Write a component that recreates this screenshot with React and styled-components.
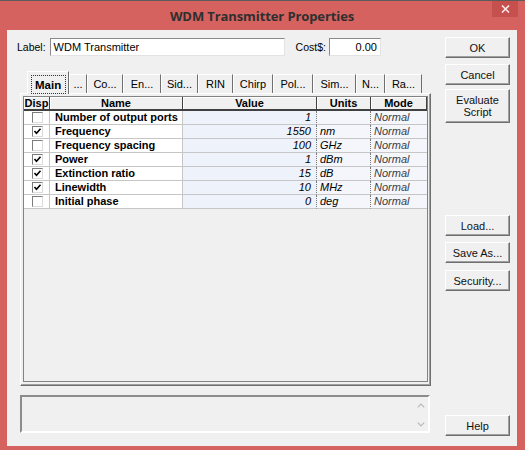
import React from "react";
import styled, { createGlobalStyle, css } from "styled-components";

const GlobalStyle = createGlobalStyle`
  html, body {
    margin: 0;
    padding: 0;
    background: #d6625f;
  }
  body {
    font-family: "Liberation Sans", Arial, sans-serif;
    font-size: 11px;
    color: #000;
  }
`;

const Window = styled.div`
  width: 525px;
  height: 450px;
  box-sizing: border-box;
  background: #d6625f;
  border-top: 1px solid #5b5b5b;
  padding: 0 8px 4px 7px;
  display: flex;
  flex-direction: column;
`;

const TitleBar = styled.div`
  height: 29px;
  display: grid;
  grid-template-columns: 1fr auto 1fr;
  align-items: center;
`;

const Title = styled.div`
  grid-column: 2;
  font-family: "Open Sans", "Noto Sans", sans-serif;
  font-weight: 700;
  font-size: 13px;
  color: #2f2f2f;
  letter-spacing: -0.1px;
`;

const CloseButton = styled.div`
  grid-column: 3;
  justify-self: end;
  align-self: start;
  width: 26px;
  height: 16px;
  margin-right: -1px;
  background: #c5504e;
  display: flex;
  align-items: center;
  justify-content: center;
`;

const Client = styled.div`
  flex: 1;
  background: #f0f0f0;
  display: flex;
`;

const LeftPane = styled.div`
  width: 424px;
  box-sizing: border-box;
  padding: 8px 0 0 13px;
  display: flex;
  flex-direction: column;
`;

const FieldRow = styled.div`
  display: flex;
  align-items: center;
  height: 18px;
  margin-left: -3px;
`;

const FieldLabel = styled.span`
  margin-right: ${(p) => p.$gap}px;
  margin-left: ${(p) => p.$lead || 0}px;
  font-size: 10.5px;
`;

const TextBox = styled.div`
  box-sizing: border-box;
  width: ${(p) => p.$width}px;
  height: 18px;
  background: #fff;
  border: 1px solid;
  border-color: #8a8a8a #e3e3e3 #e3e3e3 #8a8a8a;
  padding: 0 3px;
  line-height: 16px;
  text-align: ${(p) => (p.$right ? "right" : "left")};
  white-space: nowrap;
`;

const TabStrip = styled.div`
  display: flex;
  align-items: flex-end;
  height: 23px;
  margin: 15px 0 -1px 7px;
  position: relative;
  z-index: 1;
`;

const Tab = styled.div`
  box-sizing: border-box;
  width: ${(p) => p.$width}px;
  height: 19px;
  margin-bottom: 1px;
  border-left: 1px solid #fff;
  border-top: 1px solid #fff;
  border-right: 1px solid #6f6f6f;
  display: flex;
  align-items: center;
  justify-content: center;
  white-space: nowrap;
  font-size: 11px;
  ${(p) =>
    p.$active &&
    css`
      height: 23px;
      margin-bottom: 0;
      background: #f0f0f0;
      font-weight: 700;
      font-size: 11.5px;
      padding: 3px 2px 0 3px;
    `}
`;

const FocusRing = styled.span`
  flex: 1;
  align-self: stretch;
  border: 1px dotted #333;
  display: flex;
  align-items: center;
  padding-left: 3px;
`;

const Panel = styled.div`
  box-sizing: border-box;
  width: 411px;
  height: 293px;
  border: 1px solid;
  border-color: #fff #6f6f6f #6f6f6f #fff;
  box-shadow: inset -1px -1px 0 #a0a0a0;
  padding: 2px 3px 3px 2px;
  display: flex;
`;

const GridBox = styled.div`
  flex: 1;
  border: 1px solid #828282;
  background: #f0f0f0;
`;

const GridRow = styled.div`
  display: grid;
  grid-template-columns: 26px 133px 134px 54px 56px;
  height: 14px;
`;

const HeadCell = styled.div`
  box-sizing: border-box;
  background: #f0f0f0;
  border-right: 1px solid #404040;
  border-bottom: 2px solid #404040;
  box-shadow: inset 1px 1px 0 #fff;
  font-weight: 700;
  text-align: center;
  line-height: 12px;
  white-space: nowrap;
  overflow: hidden;
`;

const Cell = styled.div`
  box-sizing: border-box;
  height: 14px;
  line-height: 13px;
  background: #fff;
  border-bottom: 1px solid #c6c6c6;
  border-right: 1px solid #c6c6c6;
  white-space: nowrap;
  overflow: hidden;
  padding: 0 3px;
  ${(p) =>
    p.$kind === "disp" &&
    css`
      padding: 1px 0 0 8px;
    `}
  ${(p) =>
    p.$kind === "name" &&
    css`
      font-weight: 700;
      padding-left: 5px;
    `}
  ${(p) =>
    p.$kind === "value" &&
    css`
      background: #eef2fb;
      text-align: right;
      font-style: italic;
      padding-right: 5px;
      border-right: 1px dotted #7a7a7a;
    `}
  ${(p) =>
    p.$kind === "units" &&
    css`
      background: #f4f6fc;
      font-style: italic;
      border-right: 1px dotted #7a7a7a;
    `}
  ${(p) =>
    p.$kind === "mode" &&
    css`
      background: #f4f6fc;
      font-style: italic;
      color: #3c3c3c;
      border-right: none;
    `}
`;

const CheckBox = styled.div`
  box-sizing: border-box;
  width: 11px;
  height: 11px;
  background: #fff;
  border: 1px solid;
  border-color: #7c7c7c #dcdcdc #dcdcdc #7c7c7c;
  display: flex;
  align-items: center;
  justify-content: center;
`;

const StatusBox = styled.div`
  box-sizing: border-box;
  width: 410px;
  height: 38px;
  margin-top: 9px;
  border: 2px solid;
  border-color: #8c8c8c #fff #fff #8c8c8c;
  display: flex;
  justify-content: flex-end;
`;

const ScrollColumn = styled.div`
  width: 14px;
  display: flex;
  flex-direction: column;
  justify-content: space-between;
  align-items: center;
  padding: 6px 0 4px;
`;

const RightPane = styled.div`
  flex: 1;
  padding: 7px 0 10px 14px;
  display: flex;
  flex-direction: column;
`;

const Button = styled.div`
  box-sizing: border-box;
  width: 65px;
  height: ${(p) => p.$height || 21}px;
  margin-top: ${(p) => (p.$auto ? "auto" : `${p.$top || 0}px`)};
  background: #f0f0f0;
  border: 1px solid;
  border-color: #fff #6f6f6f #6f6f6f #fff;
  box-shadow: inset -1px -1px 0 #a0a0a0;
  display: flex;
  align-items: center;
  justify-content: center;
  text-align: center;
  font-size: 11px;
  line-height: 12px;
  color: #111;
`;

const Check = () => (
  <svg width="9" height="9" viewBox="0 0 9 9">
    <path d="M1.5 4 L3.5 6.2 L7.5 1.8" fill="none" stroke="#000" strokeWidth="1.6" />
  </svg>
);

const Chevron = ({ up }) => (
  <svg width="8" height="5" viewBox="0 0 8 5">
    <path
      d={up ? "M0.8 4.3 L4 1 L7.2 4.3" : "M0.8 0.7 L4 4 L7.2 0.7"}
      fill="none"
      stroke="#b8b8b8"
      strokeWidth="1.2"
    />
  </svg>
);

const tabs = [
  ["Main", 42],
  ["...", 18],
  ["Co...", 36],
  ["En...", 38],
  ["Sid...", 37],
  ["RIN", 35],
  ["Chirp", 40],
  ["Pol...", 40],
  ["Sim...", 43],
  ["N...", 29],
  ["Ra...", 37],
];

const params = [
  { disp: false, name: "Number of output ports", value: "1", units: "" },
  { disp: true, name: "Frequency", value: "1550", units: "nm" },
  { disp: false, name: "Frequency spacing", value: "100", units: "GHz" },
  { disp: true, name: "Power", value: "1", units: "dBm" },
  { disp: true, name: "Extinction ratio", value: "15", units: "dB" },
  { disp: true, name: "Linewidth", value: "10", units: "MHz" },
  { disp: false, name: "Initial phase", value: "0", units: "deg" },
];

export default function App() {
  return (
    <>
      <GlobalStyle />
      <Window>
        <TitleBar>
          <Title>WDM Transmitter Properties</Title>
          <CloseButton>
            <svg width="9" height="8" viewBox="0 0 9 8">
              <path d="M1 0.5 L8 7.5 M8 0.5 L1 7.5" stroke="#fbeaea" strokeWidth="1.6" />
            </svg>
          </CloseButton>
        </TitleBar>
        <Client>
          <LeftPane>
            <FieldRow>
              <FieldLabel $gap={4}>Label:</FieldLabel>
              <TextBox $width={235}>WDM Transmitter</TextBox>
              <FieldLabel $gap={3} $lead={11}>Cost$:</FieldLabel>
              <TextBox $width={52} $right>0.00</TextBox>
            </FieldRow>
            <TabStrip>
              {tabs.map(([label, width], i) =>
                i === 0 ? (
                  <Tab key={label} $width={width} $active>
                    <FocusRing>{label}</FocusRing>
                  </Tab>
                ) : (
                  <Tab key={label} $width={width}>
                    {label}
                  </Tab>
                )
              )}
            </TabStrip>
            <Panel>
              <GridBox>
                <GridRow>
                  <HeadCell>Disp</HeadCell>
                  <HeadCell>Name</HeadCell>
                  <HeadCell>Value</HeadCell>
                  <HeadCell>Units</HeadCell>
                  <HeadCell>Mode</HeadCell>
                </GridRow>
                {params.map((p) => (
                  <GridRow key={p.name}>
                    <Cell $kind="disp">
                      <CheckBox>{p.disp && <Check />}</CheckBox>
                    </Cell>
                    <Cell $kind="name">{p.name}</Cell>
                    <Cell $kind="value">{p.value}</Cell>
                    <Cell $kind="units">{p.units}</Cell>
                    <Cell $kind="mode">Normal</Cell>
                  </GridRow>
                ))}
              </GridBox>
            </Panel>
            <StatusBox>
              <ScrollColumn>
                <Chevron up />
                <Chevron />
              </ScrollColumn>
            </StatusBox>
          </LeftPane>
          <RightPane>
            <Button>OK</Button>
            <Button $top={6}>Cancel</Button>
            <Button $top={4} $height={34}>
              Evaluate
              <br />
              Script
            </Button>
            <Button $top={92}>Load...</Button>
            <Button $top={6}>Save As...</Button>
            <Button $top={7}>Security...</Button>
            <Button $auto>Help</Button>
          </RightPane>
        </Client>
      </Window>
    </>
  );
}
